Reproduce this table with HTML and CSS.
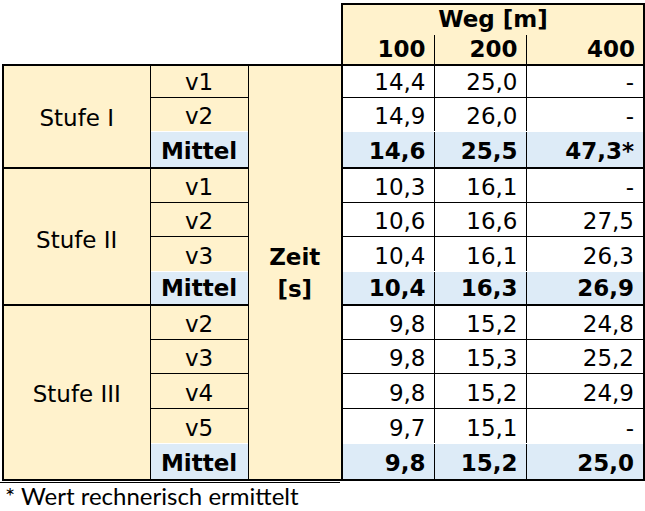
FILE: index.html
```html
<!DOCTYPE html>
<html lang="de">
<head>
<meta charset="utf-8">
<title>Zeit je Weg</title>
<link rel="stylesheet" href="styles.css">
</head>
<body>
<div class="page">
<table class="grid">
  <colgroup>
    <col class="c1"><col class="c2"><col class="c3"><col class="c4"><col class="c5"><col class="c6">
  </colgroup>
  <thead>
    <tr class="ha">
      <td class="blank" colspan="3" rowspan="2"></td>
      <th class="weg" colspan="3">Weg [m]</th>
    </tr>
    <tr class="hb">
      <th class="hn first">100</th>
      <th class="hn">200</th>
      <th class="hn last">400</th>
    </tr>
  </thead>
  <tbody>
    <tr class="r top h32">
      <td class="stufe" rowspan="3">Stufe I</td>
      <td class="v">v1</td>
      <td class="zeit" rowspan="12">Zeit<br>[s]</td>
      <td class="n">14,4</td><td class="n">25,0</td><td class="n last">-</td>
    </tr>
    <tr class="r pre h33">
      <td class="v">v2</td>
      <td class="n">14,9</td><td class="n">26,0</td><td class="n last">-</td>
    </tr>
    <tr class="mittel gend h37">
      <td class="v">Mittel</td>
      <td class="n">14,6</td><td class="n">25,5</td><td class="n last">47,3*</td>
    </tr>

    <tr class="r h34">
      <td class="stufe s2" rowspan="4">Stufe II</td>
      <td class="v">v1</td>
      <td class="n">10,3</td><td class="n">16,1</td><td class="n last">-</td>
    </tr>
    <tr class="r h34">
      <td class="v">v2</td>
      <td class="n">10,6</td><td class="n">16,6</td><td class="n last">27,5</td>
    </tr>
    <tr class="r pre h35">
      <td class="v">v3</td>
      <td class="n">10,4</td><td class="n">16,1</td><td class="n last">26,3</td>
    </tr>
    <tr class="mittel gend h34">
      <td class="v">Mittel</td>
      <td class="n">10,4</td><td class="n">16,3</td><td class="n last">26,9</td>
    </tr>

    <tr class="r h34">
      <td class="stufe s3" rowspan="5">Stufe III</td>
      <td class="v">v2</td>
      <td class="n">9,8</td><td class="n">15,2</td><td class="n last">24,8</td>
    </tr>
    <tr class="r h34">
      <td class="v">v3</td>
      <td class="n">9,8</td><td class="n">15,3</td><td class="n last">25,2</td>
    </tr>
    <tr class="r h35">
      <td class="v">v4</td>
      <td class="n">9,8</td><td class="n">15,2</td><td class="n last">24,9</td>
    </tr>
    <tr class="r pre h35">
      <td class="v">v5</td>
      <td class="n">9,7</td><td class="n">15,1</td><td class="n last">-</td>
    </tr>
    <tr class="mittel gend h37">
      <td class="v">Mittel</td>
      <td class="n">9,8</td><td class="n">15,2</td><td class="n last">25,0</td>
    </tr>
  </tbody>
</table>
<div class="rule"></div>
<p class="note">* Wert rechnerisch ermittelt</p>
</div>
</body>
</html>
```
FILE: styles.css
```css
html, body {
  margin: 0;
  padding: 0;
  background: #ffffff;
}

.page {
  padding: 3px 0 0 2px;
}

.grid {
  border-collapse: collapse;
  table-layout: fixed;
  width: 641px;
  font-family: "DejaVu Sans", Verdana, sans-serif;
  font-size: 23px;
  line-height: 27px;
  color: #000;
}

.c1 { width: 147px; }
.c2 { width: 98px; }
.c3 { width: 94px; }
.c4 { width: 92px; }
.c5 { width: 92px; }
.c6 { width: 118px; }

.grid td,
.grid th {
  padding: 0 8px 1px 0;
  border: 1px solid #000;
  vertical-align: bottom;
  overflow: visible;
  white-space: nowrap;
}

/* header */
.ha { height: 31px; }
.hb { height: 30px; }

.grid .blank {
  border: none;
  background: #fff;
}

.grid .weg {
  background: #fff2cc;
  font-weight: bold;
  text-align: center;
  padding: 0 0 2px 0;
  border-top: 2px solid #000;
  border-left: 2px solid #000;
  border-right: 2px solid #000;
  border-bottom: none;
}

.grid .hn {
  background: #fff2cc;
  font-weight: bold;
  text-align: right;
  padding: 0 8px 1px 0;
  border-top: none;
  border-bottom: 2px solid #000;
}

.grid .hn.first { border-left: 2px solid #000; }
.grid .hn.last { border-right: 2px solid #000; }

/* body rows */
.h32 { height: 32px; }
.h33 { height: 34px; }
.h34 { height: 34px; }
.h35 { height: 35px; }
.h37 { height: 37px; }

.grid .top td { border-top: 2px solid #000; }

.grid .stufe {
  background: #fff2cc;
  text-align: center;
  vertical-align: middle;
  padding: 4px 0 0 0;
  border-left: 2px solid #000;
  border-top: 2px solid #000;
  border-bottom: 2px solid #000;
}

.grid .s2 { padding-top: 8px; }
.grid .s3 { padding-top: 4px; }

.grid .v {
  background: #fff2cc;
  text-align: center;
  padding: 0 0 1px 0;
}

.grid .zeit {
  background: #fff2cc;
  font-weight: bold;
  text-align: center;
  vertical-align: middle;
  line-height: 32px;
  padding: 0;
  border-top: 2px solid #000;
  border-right: 2px solid #000;
  border-bottom: 2px solid #000;
}

.grid .n {
  background: #fff;
  text-align: right;
}

.grid .n.last { padding-right: 9px; border-right: 2px solid #000; }

.grid .pre td { border-bottom: 1px solid #fff; }

.grid .mittel td {
  background: #ddebf7;
  font-weight: bold;
  padding-bottom: 2px;
}

.grid .gend td { border-bottom: 2px solid #000; }

.rule {
  width: 340px;
  margin: 1px 0 0 -2px;
  border-top: 1px solid #000;
}

.note {
  margin: 0;
  padding: 1px 0 0 3px;
  font-family: Lato, "Liberation Sans", sans-serif;
  font-size: 24px;
  line-height: 24px;
  color: #000;
}
```
